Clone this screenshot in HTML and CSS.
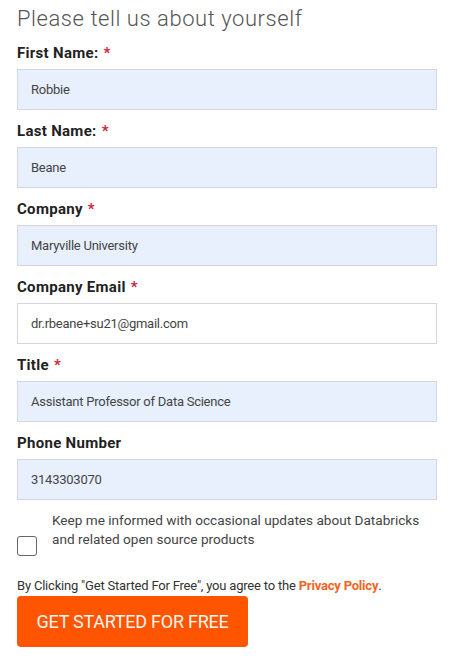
FILE: index.html
```html
<!DOCTYPE html>
<html>
<head>
<meta charset="utf-8">
<link rel="stylesheet" href="styles.css">
</head>
<body>
<form class="form">
  <h1 class="title">Please tell us about yourself</h1>
  <div class="field">
    <label class="label">First Name: <span class="req">*</span></label>
    <div class="input filled">Robbie</div>
  </div>
  <div class="field">
    <label class="label">Last Name: <span class="req">*</span></label>
    <div class="input filled">Beane</div>
  </div>
  <div class="field">
    <label class="label">Company <span class="req">*</span></label>
    <div class="input filled">Maryville University</div>
  </div>
  <div class="field">
    <label class="label">Company Email <span class="req">*</span></label>
    <div class="input">dr.rbeane+su21@gmail.com</div>
  </div>
  <div class="field">
    <label class="label">Title <span class="req">*</span></label>
    <div class="input filled">Assistant Professor of Data Science</div>
  </div>
  <div class="field">
    <label class="label">Phone Number</label>
    <div class="input filled">3143303070</div>
  </div>
  <div class="optin">
    <span class="checkbox"></span>
    <span class="optin-text">Keep me informed with occasional updates about Databricks and related open source products</span>
  </div>
  <p class="legal">By Clicking "Get Started For Free", you agree to the <a class="link">Privacy Policy</a>.</p>
  <button class="btn" type="button">GET STARTED FOR FREE</button>
</form>
</body>
</html>
```

FILE: styles.css
```css
html, body {
  margin: 0;
  padding: 0;
  background: #fff;
}
body {
  font-family: Roboto, "Liberation Sans", sans-serif;
  color: #222;
}
.form {
  width: 420px;
  padding: 6px 0 0 17px;
  display: flex;
  flex-direction: column;
}
.title {
  margin: 0;
  font-size: 22px;
  line-height: 26px;
  font-weight: 300;
  color: #555;
  letter-spacing: 0.55px;
}
.field {
  display: flex;
  flex-direction: column;
  gap: 7px;
  margin-top: 12px;
}
.label {
  font-size: 15px;
  line-height: 18px;
  font-weight: 700;
  color: #222;
  letter-spacing: 0.3px;
}
.req {
  color: #d0263a;
  margin-left: 1px;
}
.input {
  box-sizing: border-box;
  height: 41px;
  border: 1px solid #d3d7dc;
  background: #fff;
  padding: 0 13px;
  display: flex;
  align-items: center;
  font-size: 13px;
  letter-spacing: -0.25px;
  color: #444;
}
.input.filled {
  background: #e8f0fe;
}
.optin {
  display: flex;
  align-items: flex-start;
  margin-top: 11px;
}
.checkbox {
  box-sizing: border-box;
  flex: none;
  width: 20px;
  height: 20px;
  border: 1px solid #666;
  border-radius: 3px;
  margin-top: 25px;
  margin-right: 15px;
}
.optin-text {
  max-width: 372px;
  font-size: 13.6px;
  line-height: 19px;
  color: #444;
}
.legal {
  margin: 22px 0 2px;
  font-size: 13px;
  line-height: 16px;
  letter-spacing: -0.2px;
  color: #333;
}
.link {
  color: #f2641f;
  font-weight: 700;
}
.btn {
  align-self: flex-start;
  width: 231px;
  height: 51px;
  border: 0;
  border-radius: 4px;
  background: #ff5400;
  color: #fff6ef;
  font-family: Roboto, "Liberation Sans", sans-serif;
  font-size: 18px;
  font-weight: 400;
  letter-spacing: -0.25px;
  padding: 0;
}
```
